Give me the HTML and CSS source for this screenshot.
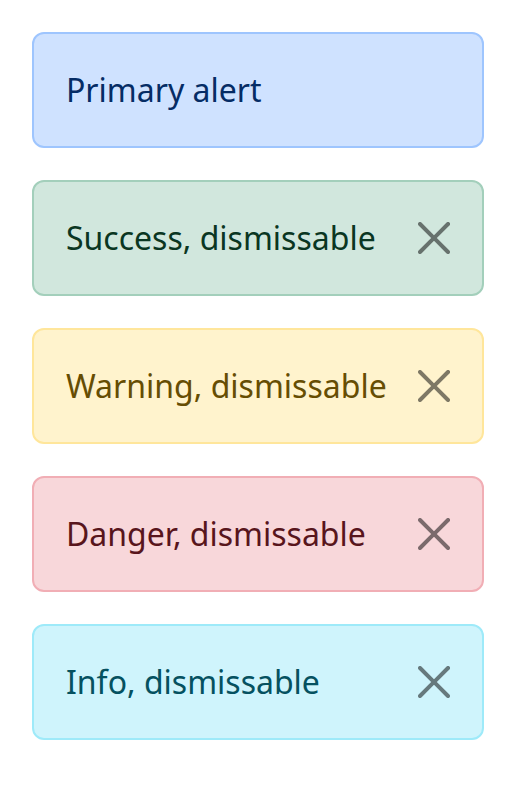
FILE: index.html
```html
<!DOCTYPE html>
<html lang="en">
<head>
<meta charset="utf-8">
<title>Alerts</title>
<link rel="stylesheet" href="styles.css">
</head>
<body>
<div class="stack">
  <div class="alert alert-primary">Primary alert</div>
  <div class="alert alert-success dismissible"><span>Success, dismissable</span><button class="btn-close" aria-label="Close"><svg viewBox="0 0 16 16"><path d="M.293.293a1 1 0 0 1 1.414 0L8 6.586 14.293.293a1 1 0 1 1 1.414 1.414L9.414 8l6.293 6.293a1 1 0 0 1-1.414 1.414L8 9.414l-6.293 6.293a1 1 0 0 1-1.414-1.414L6.586 8 .293 1.707a1 1 0 0 1 0-1.414"/></svg></button></div>
  <div class="alert alert-warning dismissible"><span>Warning, dismissable</span><button class="btn-close" aria-label="Close"><svg viewBox="0 0 16 16"><path d="M.293.293a1 1 0 0 1 1.414 0L8 6.586 14.293.293a1 1 0 1 1 1.414 1.414L9.414 8l6.293 6.293a1 1 0 0 1-1.414 1.414L8 9.414l-6.293 6.293a1 1 0 0 1-1.414-1.414L6.586 8 .293 1.707a1 1 0 0 1 0-1.414"/></svg></button></div>
  <div class="alert alert-danger dismissible"><span>Danger, dismissable</span><button class="btn-close" aria-label="Close"><svg viewBox="0 0 16 16"><path d="M.293.293a1 1 0 0 1 1.414 0L8 6.586 14.293.293a1 1 0 1 1 1.414 1.414L9.414 8l6.293 6.293a1 1 0 0 1-1.414 1.414L8 9.414l-6.293 6.293a1 1 0 0 1-1.414-1.414L6.586 8 .293 1.707a1 1 0 0 1 0-1.414"/></svg></button></div>
  <div class="alert alert-info dismissible"><span>Info, dismissable</span><button class="btn-close" aria-label="Close"><svg viewBox="0 0 16 16"><path d="M.293.293a1 1 0 0 1 1.414 0L8 6.586 14.293.293a1 1 0 1 1 1.414 1.414L9.414 8l6.293 6.293a1 1 0 0 1-1.414 1.414L8 9.414l-6.293 6.293a1 1 0 0 1-1.414-1.414L6.586 8 .293 1.707a1 1 0 0 1 0-1.414"/></svg></button></div>
</div>
</body>
</html>
```
FILE: styles.css
```css
html, body {
  margin: 0;
  padding: 0;
  background: #fff;
}
body {
  font-family: "Noto Sans", "Open Sans", sans-serif;
  font-size: 32px;
  line-height: 48px;
}
.stack {
  padding: 32px;
  display: flex;
  flex-direction: column;
  gap: 32px;
}
.alert {
  display: flex;
  align-items: center;
  justify-content: space-between;
  padding: 32px;
  border: 2px solid transparent;
  border-radius: 12px;
  height: 48px;
}
.alert-primary { background: #cfe2ff; border-color: #9ec5fe; color: #052c65; }
.alert-success { background: #d1e7dd; border-color: #a3cfbb; color: #0a3622; }
.alert-warning { background: #fff3cd; border-color: #ffe69b; color: #664d03; }
.alert-danger  { background: #f8d7da; border-color: #f1aeb5; color: #58151c; }
.alert-info    { background: #cff4fc; border-color: #9eeaf9; color: #055160; }
.btn-close {
  width: 32px;
  height: 32px;
  padding: 0;
  border: 0;
  background: transparent;
  opacity: 0.5;
  display: flex;
  flex-shrink: 0;
}
.btn-close svg {
  width: 32px;
  height: 32px;
  fill: #000;
}
```
